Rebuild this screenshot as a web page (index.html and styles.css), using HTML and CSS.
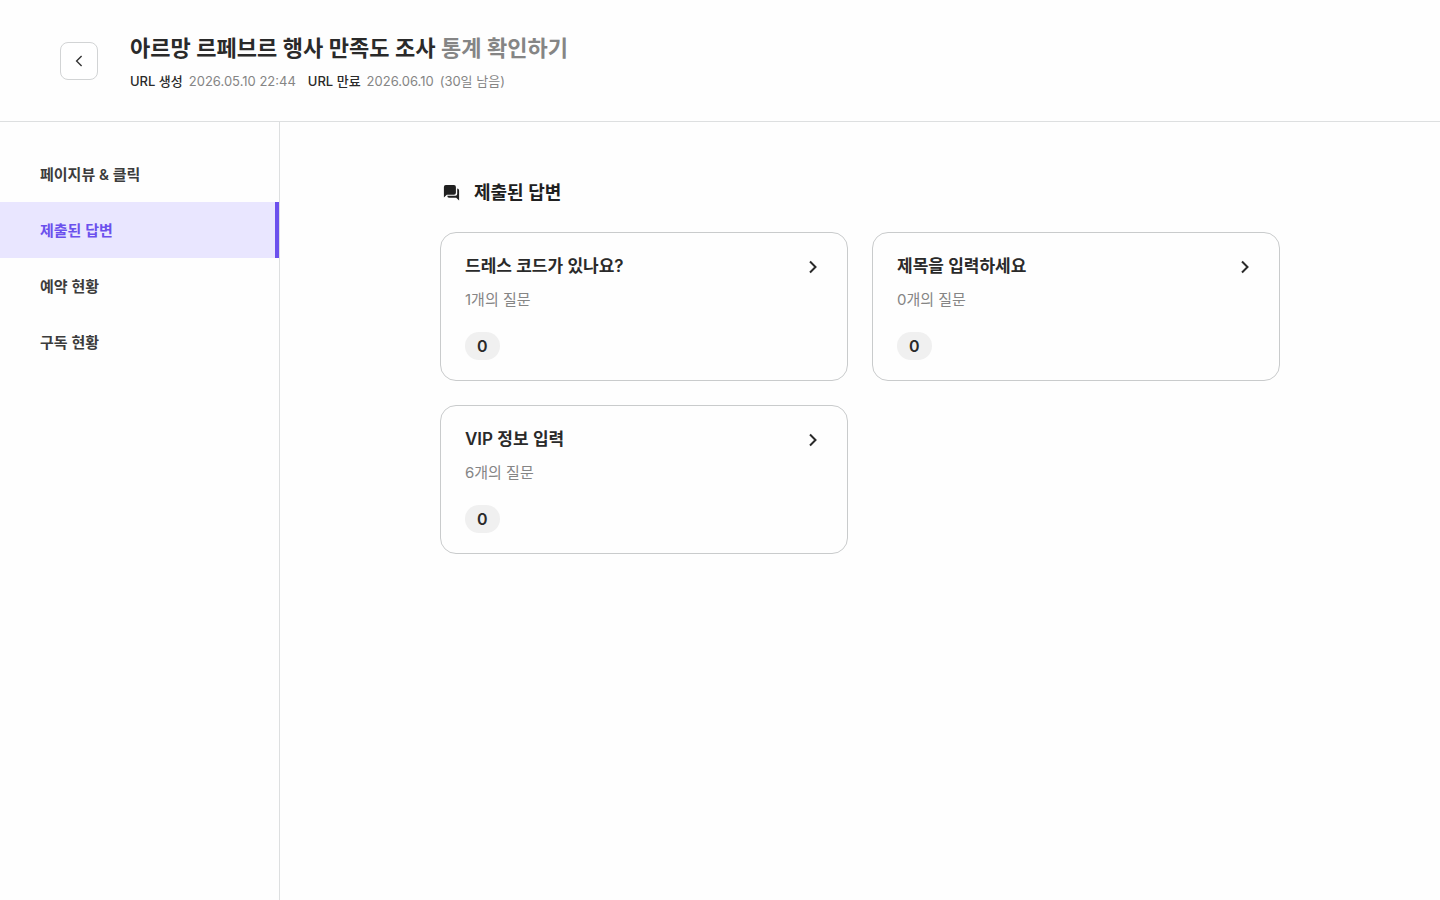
FILE: index.html
```html
<!DOCTYPE html>
<html lang="ko">
<head>
    <meta charset="UTF-8">
    <meta name="viewport" content="width=device-width, initial-scale=1.0">
    <title>통계 확인하기</title>
    <link rel="stylesheet" href="styles.css">
</head>
<body>
    <header class="header">
        <button type="button" class="back-button" aria-label="뒤로">
            <svg width="16" height="16" viewBox="0 0 16 16" fill="none" stroke="currentColor" stroke-width="1.4">
                <path d="M10.6 3L5.6 8L10.6 13"/>
            </svg>
        </button>
        <div class="header-text">
            <h1 class="title">아르망 르페브르 행사 만족도 조사 <span class="title-sub">통계 확인하기</span></h1>
            <dl class="meta">
                <dt>URL 생성</dt>
                <dd>2026.05.10 22:44</dd>
                <dt>URL 만료</dt>
                <dd>2026.06.10</dd>
                <dd>(30일 남음)</dd>
            </dl>
        </div>
    </header>

    <div class="layout">
        <nav class="sidebar">
            <a href="#pageview" class="nav-item">페이지뷰 &amp; 클릭</a>
            <a href="#answers" class="nav-item active">제출된 답변</a>
            <a href="#reservation" class="nav-item">예약 현황</a>
            <a href="#subscription" class="nav-item">구독 현황</a>
        </nav>

        <main class="main">
            <div class="content">
                <h2 class="section-title">
                    <svg width="22" height="22" viewBox="0 0 22 22" fill="currentColor">
                        <path d="M5.8 3H14a1.9 1.9 0 0 1 1.9 1.9v5.9a1.9 1.9 0 0 1-1.9 1.9H6.8L3.9 15.6V4.9A1.9 1.9 0 0 1 5.8 3z"/>
                        <path d="M17.2 6.6a1.9 1.9 0 0 1 1.9 1.8v10.2l-2.9-2.8H9a1.7 1.7 0 0 1-1.7-1.7v-.3h8.1a1.8 1.8 0 0 0 1.8-1.8z"/>
                    </svg>
                    제출된 답변
                </h2>

                <div class="card-grid">
                    <a href="#form-1" class="card">
                        <div class="card-head">
                            <h3 class="card-title">드레스 코드가 있나요?</h3>
                            <svg class="card-arrow" width="20" height="20" viewBox="0 0 20 20" fill="none" stroke="currentColor" stroke-width="2">
                                <path d="M7 4.5L12.5 10L7 15.5"/>
                            </svg>
                        </div>
                        <p class="card-desc">1개의 질문</p>
                        <span class="badge">0</span>
                    </a>
                    <a href="#form-2" class="card">
                        <div class="card-head">
                            <h3 class="card-title">제목을 입력하세요</h3>
                            <svg class="card-arrow" width="20" height="20" viewBox="0 0 20 20" fill="none" stroke="currentColor" stroke-width="2">
                                <path d="M7 4.5L12.5 10L7 15.5"/>
                            </svg>
                        </div>
                        <p class="card-desc">0개의 질문</p>
                        <span class="badge">0</span>
                    </a>
                    <a href="#form-3" class="card">
                        <div class="card-head">
                            <h3 class="card-title">VIP 정보 입력</h3>
                            <svg class="card-arrow" width="20" height="20" viewBox="0 0 20 20" fill="none" stroke="currentColor" stroke-width="2">
                                <path d="M7 4.5L12.5 10L7 15.5"/>
                            </svg>
                        </div>
                        <p class="card-desc">6개의 질문</p>
                        <span class="badge">0</span>
                    </a>
                </div>
            </div>
        </main>
    </div>
</body>
</html>
```

FILE: styles.css
```css
* {
    box-sizing: border-box;
    margin: 0;
    padding: 0;
}
body {
    display: flex;
    flex-direction: column;
    min-height: 100vh;
    background-color: #fefefe;
    color: #2a2a2a;
    font-family: Inter, "Noto Sans CJK KR", sans-serif;
}
a {
    color: inherit;
    text-decoration: none;
}

/* header */
.header {
    display: flex;
    align-items: center;
    gap: 32px;
    padding: 31px 60px;
    border-bottom: 1px solid #dddfe0;
}
.back-button {
    display: flex;
    align-items: center;
    justify-content: center;
    width: 38px;
    height: 38px;
    border: 1px solid #d2d4d5;
    border-radius: 8px;
    background-color: #fff;
    color: #333;
    cursor: pointer;
}
.title {
    font-size: 22px;
    font-weight: 600;
    line-height: 34px;
}
.title-sub {
    color: #858585;
}
.meta {
    display: flex;
    gap: 6px;
    margin-top: 7px;
    font-size: 13px;
    line-height: 18px;
}
.meta dt {
    font-weight: 500;
}
.meta dd {
    color: #858585;
}
.meta dd + dt {
    margin-left: 6px;
}

/* sidebar */
.layout {
    display: flex;
    flex: 1;
}
.sidebar {
    flex: 0 0 280px;
    padding-top: 24px;
    border-right: 1px solid #dddfe0;
}
.nav-item {
    display: block;
    padding: 17px 40px 15px;
    color: #3c3c3c;
    font-size: 15px;
    font-weight: 600;
    line-height: 24px;
}
.nav-item.active {
    border-right: 4px solid #6b50ed;
    background-color: #e9e6ff;
    color: #6b50ed;
}

/* content */
.main {
    flex: 1;
    padding: 57px 40px;
}
.content {
    max-width: 840px;
    margin: 0 auto;
}
.section-title {
    display: flex;
    align-items: center;
    gap: 12px;
    margin-bottom: 25px;
    color: #202020;
    font-size: 18px;
    font-weight: 600;
    line-height: 28px;
}
.card-grid {
    display: grid;
    grid-template-columns: repeat(2, 1fr);
    gap: 24px;
}
.card {
    padding: 20px 24px;
    border: 1px solid #c9cbcc;
    border-radius: 16px;
}
.card-head {
    display: flex;
    align-items: center;
    justify-content: space-between;
    margin-bottom: 8px;
}
.card-title {
    font-size: 17px;
    font-weight: 600;
    line-height: 27px;
}
.card-desc {
    margin-bottom: 20px;
    color: #858585;
    font-size: 15px;
    line-height: 24px;
}
.badge {
    display: block;
    width: fit-content;
    padding: 0 12px;
    border-radius: 14px;
    background-color: #f0f0f0;
    font-size: 16px;
    font-weight: 600;
    line-height: 28px;
}
```
